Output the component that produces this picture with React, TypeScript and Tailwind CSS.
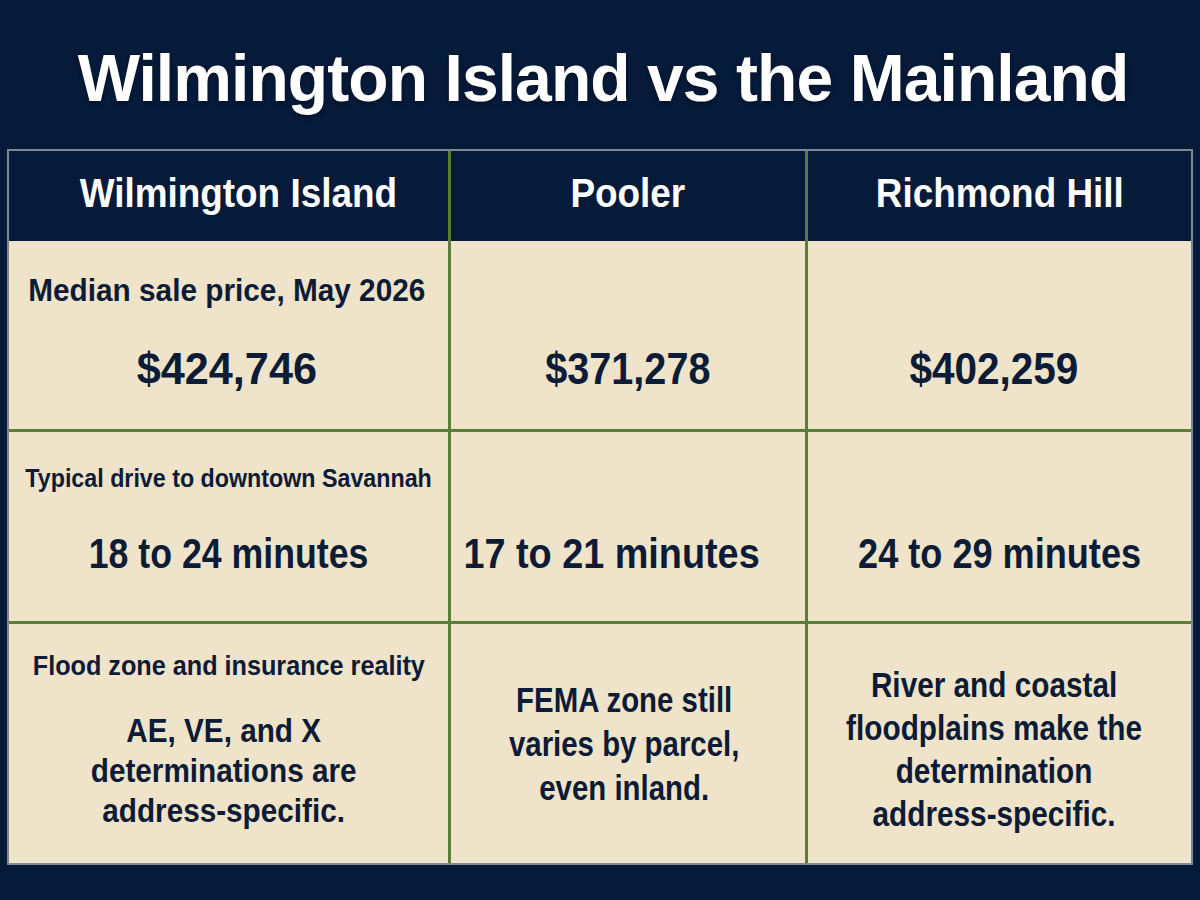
import type { ReactNode } from "react";

// narrow text: squeeze horizontally around its centre
function Sq({ className, children }: { className: string; children: ReactNode }) {
  return (
    <span className={`inline-block whitespace-nowrap origin-center ${className}`}>
      {children}
    </span>
  );
}

const line = "border-l-[3px] border-[#5b7d3a]";

function ValueCell({
  label,
  labelCls,
  value,
  valueCls,
  pt,
  gap,
  first,
  extra,
}: {
  label?: string;
  labelCls?: string;
  value: string;
  valueCls: string;
  pt: string;
  gap: string;
  first?: boolean;
  extra?: string;
}) {
  return (
    <div className={`flex flex-col items-center ${pt} ${first ? "" : line} ${extra ?? ""}`}>
      <div className="h-[40px] leading-[40px] font-bold">
        {label && <Sq className={labelCls ?? ""}>{label}</Sq>}
      </div>
      <div className={`h-[50px] leading-[50px] font-bold ${gap}`}>
        <Sq className={valueCls}>{value}</Sq>
      </div>
    </div>
  );
}

export default function App() {
  return (
    <div className="w-[1200px] h-[900px] bg-[#061a3a] font-['Liberation_Sans',Arial,sans-serif] flex flex-col items-center">
      <h1 className="mt-[45px] pl-[6px] text-[66px] leading-none font-bold text-white tracking-[-0.014em] [text-shadow:0_2px_4px_rgba(0,0,0,0.35)]">
        Wilmington Island vs the Mainland
      </h1>

      <div className="mt-[38px] w-[1186px] border-2 border-[#7d8893] text-[#0c1b36]">
        {/* header */}
        <div className="grid grid-cols-[439px_357px_386px] h-[90px] text-white font-bold">
          <div className="flex items-center justify-center pb-[4px] pl-[20px]">
            <Sq className="text-[41px] scale-x-[0.9]">Wilmington Island</Sq>
          </div>
          <div className={`flex items-center justify-center pb-[4px] ${line}`}>
            <Sq className="text-[41px] scale-x-[0.9]">Pooler</Sq>
          </div>
          <div className={`flex items-center justify-center pb-[4px] ${line}`}>
            <Sq className="text-[41px] scale-x-[0.9]">Richmond Hill</Sq>
          </div>
        </div>

        {/* median price */}
        <div className="grid grid-cols-[439px_357px_386px] h-[188px] bg-[#efe3c9]">
          <ValueCell
            first
            label="Median sale price, May 2026"
            labelCls="text-[31px] scale-x-[0.96]"
            value="$424,746"
            valueCls="text-[45px] scale-x-[0.96]"
            pt="pt-[30px]"
            gap="mt-[33px]"
            extra="pr-[4px]"
          />
          <ValueCell value="$371,278" valueCls="text-[45px] scale-x-[0.88]" pt="pt-[30px]" gap="mt-[33px]" />
          <ValueCell value="$402,259" valueCls="text-[45px] scale-x-[0.9]" pt="pt-[30px]" gap="mt-[33px]" extra="pr-[12px]" />
        </div>

        {/* drive time */}
        <div className="grid grid-cols-[439px_357px_386px] h-[192px] bg-[#efe3c9] border-t-[3px] border-[#5b7d3a]">
          <ValueCell
            first
            label="Typical drive to downtown Savannah"
            labelCls="text-[25px] scale-x-[0.93]"
            value="18 to 24 minutes"
            valueCls="text-[42px] scale-x-[0.85]"
            pt="pt-[26px]"
            gap="mt-[31px]"
          />
          <ValueCell
            value="17 to 21 minutes"
            valueCls="text-[42px] scale-x-[0.9]"
            pt="pt-[26px]"
            gap="mt-[31px]"
            extra="pr-[32px]"
          />
          <ValueCell value="24 to 29 minutes" valueCls="text-[42px] scale-x-[0.86]" pt="pt-[26px]" gap="mt-[31px]" />
        </div>

        {/* flood */}
        <div className="grid grid-cols-[439px_357px_386px] h-[242px] bg-[#efe3c9] border-t-[3px] border-[#5b7d3a]">
          <div className="flex flex-col items-center pt-[22px] font-bold">
            <div className="h-[40px] leading-[40px]">
              <Sq className="text-[28px] scale-x-[0.9]">Flood zone and insurance reality</Sq>
            </div>
            <div className="mt-[25px] pr-[10px] text-center leading-[40px]">
              <Sq className="text-[33px] scale-x-[0.9]">
                AE, VE, and X
                <br />
                determinations are
                <br />
                address-specific.
              </Sq>
            </div>
          </div>
          <div className={`flex items-center justify-center text-center font-bold leading-[44px] pr-[8px] ${line}`}>
            <Sq className="text-[35px] scale-x-[0.84]">
              FEMA zone still
              <br />
              varies by parcel,
              <br />
              even inland.
            </Sq>
          </div>
          <div className={`flex items-center justify-center text-center font-bold leading-[43px] pt-[10px] pr-[10px] ${line}`}>
            <Sq className="text-[35px] scale-x-[0.85]">
              River and coastal
              <br />
              floodplains make the
              <br />
              determination
              <br />
              address-specific.
            </Sq>
          </div>
        </div>
      </div>
    </div>
  );
}
